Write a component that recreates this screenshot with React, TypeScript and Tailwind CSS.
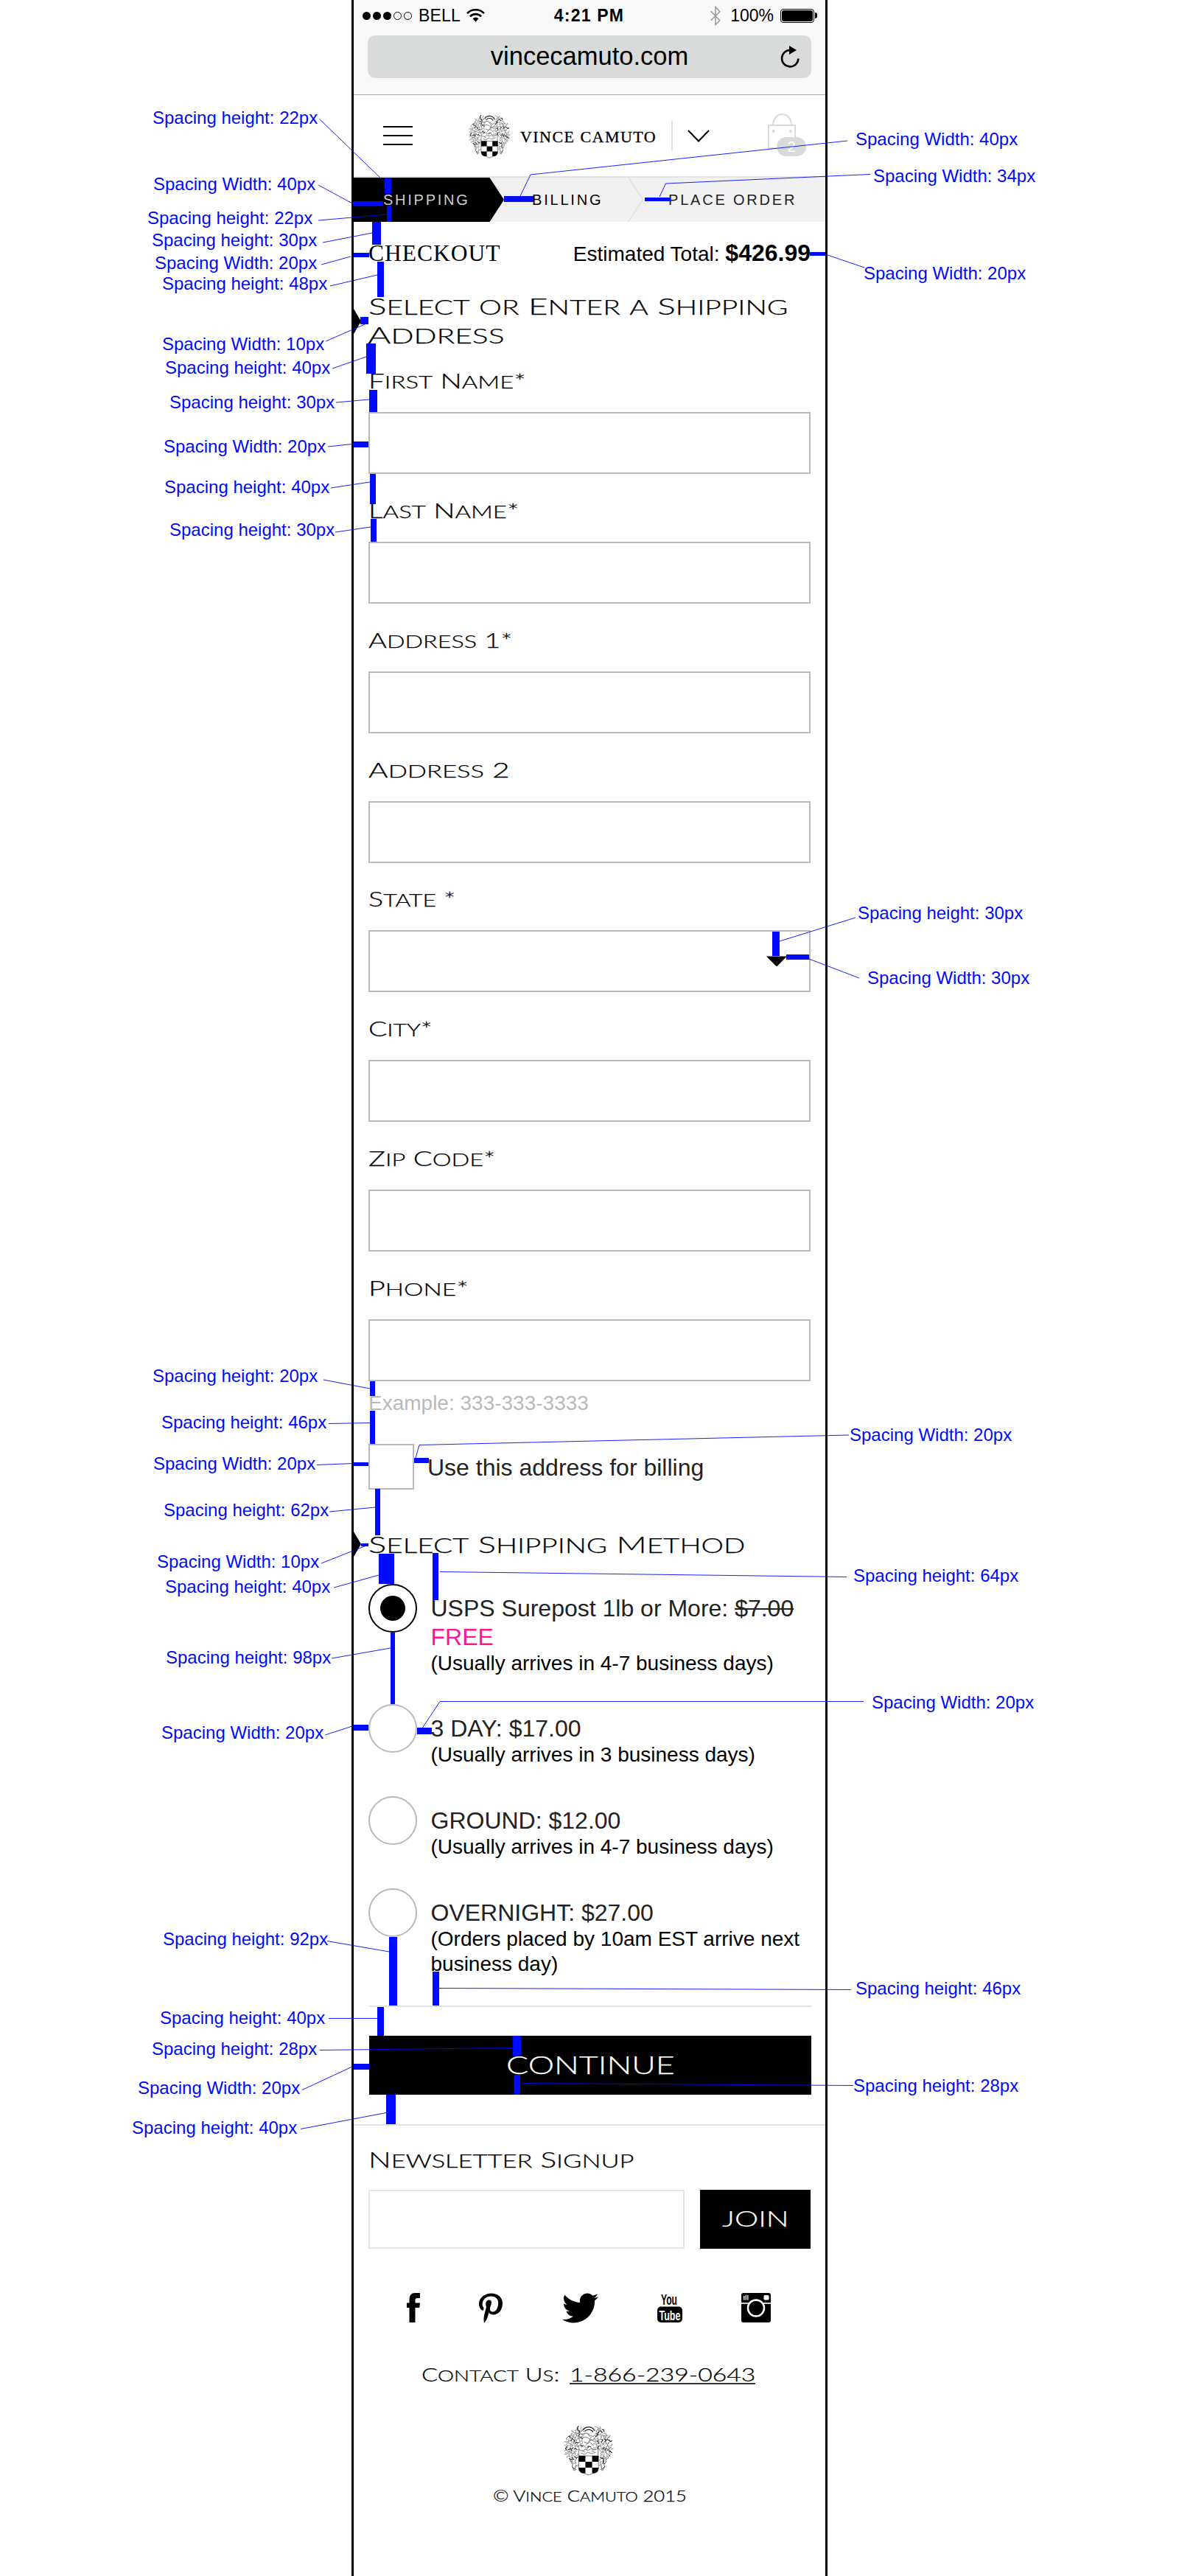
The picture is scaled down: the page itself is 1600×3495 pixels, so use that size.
import React, { useLayoutEffect, useRef, useState } from 'react';
import { FaPinterestP, FaTwitter } from 'react-icons/fa';

/* Wide engraved lettering: light capitals stretched to a set measure. */
function Engraved({ text, width, className = '' }: { text: string; width: number; className?: string }) {
  const ref = useRef<HTMLSpanElement>(null);
  const [scale, setScale] = useState(1.4);
  useLayoutEffect(() => {
    if (ref.current) setScale(width / ref.current.offsetWidth);
  }, [width, text]);
  const runs = text.match(/[a-z]+|[^a-z]+/g) ?? [];
  return (
    <span
      className={'block whitespace-nowrap font-[Lato,sans-serif] font-light [-webkit-text-stroke:0.25px_currentColor] ' + className}
      style={{ width }}
    >
      <span ref={ref} className="block w-max origin-left uppercase" style={{ transform: `scaleX(${scale})` }}>
        {runs.map((r, i) => (
          <span key={i} className={/[a-z]/.test(r) ? 'text-[0.85em] leading-none' : ''}>{r}</span>
        ))}
      </span>
    </span>
  );
}

const leaves = Array.from({ length: 300 }, (_, i) => {
  const a = i * 2.39996;
  const r = Math.sqrt((i + 0.5) / 300);
  const x = 34 + Math.cos(a) * r * 32;
  const y = 31 + Math.sin(a) * r * 29.5;
  return { x, y, turn: (i * i * 37 + i * 91) % 360, heavy: (i * i * 7) % 5 === 0 };
}).filter((l) => !(l.x > 19 && l.x < 49 && l.y > 33) && !(l.x > 27 && l.x < 42 && l.y < 30));

function Crest({ className = '' }: { className?: string }) {
  return (
    <svg viewBox="0 0 68 70" preserveAspectRatio="none" className={className} fill="none" stroke="#222">
      {leaves.map((l, i) => (
        <path
          key={i}
          d="M-2 .8Q-1.400-2 0-.8T2-.8"
          strokeWidth={l.heavy ? 1.1 : 0.45}
          transform={`translate(${l.x.toFixed(1)} ${l.y.toFixed(1)}) rotate(${l.turn})`}
        />
      ))}
      <path
        d="M10 50l3 5-1 3 4 3 1-5M58 50l-3 5 1 3-4 3-1-5M13 58l2 5 3-2M55 58l-2 5-3-2"
        strokeWidth=".7"
      />
      <path d="M27 8a8 7 0 0 1 15 1M29 10a6 5 0 0 1 11 1" strokeWidth="1.200" />
      <path d="M25 14q6-4 10 0t8 1M26 19q5-3 9 1t7-1M28 24l5 2 5-5 4 3M30 29l5-5 6 5M33 13l3 4M38 17l-3 6" strokeWidth=".6" />
      <path d="M21 43v-9q5 4 9 0 4 3 8-1 5 4 9-1v11M24 39l5 2 4-3 5 2 6-2M26 36l3 2M38 36l4 1" strokeWidth=".6" />
      <path d="M21 43h26.500v17q0 6-7 6.500l-6.300 2.500-6.200-2.500q-7-.5-7-6.500z" fill="#fff" strokeWidth=".6" />
      <path
        d="M21 43h9v8h-9zM39 43h8.500v8H39zM30 51h9v8h-9zM21 59h9v7.500h-3q-6-1-6-7.500zM39 59h8.500q0 6.500-5.500 7.500h-3z"
        fill="#000"
        stroke="none"
      />
    </svg>
  );
}

function StatusBar() {
  return (
    <div className="grid h-[42px] grid-cols-3 items-center pl-3 pr-[11px] text-[23px] leading-none">
      <div className="flex items-center">
        <span className="flex gap-[3px]">
          <i className="size-[11px] rounded-full bg-black" />
          <i className="size-[11px] rounded-full bg-black" />
          <i className="size-[11px] rounded-full bg-black" />
          <i className="size-[11px] rounded-full border border-black" />
          <i className="size-[11px] rounded-full border border-black" />
        </span>
        <span className="ml-[9px] tracking-[0.2px]">BELL</span>
        <svg viewBox="0 0 25 18" className="ml-[8px] h-[18px] w-[25px]" fill="none" stroke="#000" strokeWidth="2.600">
          <path d="M1 6.200a16 16 0 0 1 23 0M5 10.300a10.500 10.500 0 0 1 15 0" />
          <path d="M8.600 13.200a5.600 5.600 0 0 1 7.800 0L12.500 17.800z" fill="#000" stroke="none" />
        </svg>
      </div>
      <span className="pr-[2px] text-center font-bold tracking-[1.200px]">4:21 PM</span>
      <div className="flex items-center justify-end">
        <svg viewBox="0 0 16 28" className="mr-3 h-[27px] w-4" fill="none" stroke="#999" strokeWidth="1.600">
          <path d="M1.500 7.500l12.500 13L8 26.500v-25l6 6.500L1.500 20.500" />
        </svg>
        <span>100%</span>
        <span className="ml-[9px] flex h-[19px] w-[46px] rounded-[4px] border border-black p-px">
          <i className="flex-1 rounded-[3px] bg-black" />
        </span>
        <i className="ml-px h-2 w-[3px] rounded-r bg-black" />
      </div>
    </div>
  );
}

function Header() {
  return (
    <header className="flex h-[112px] items-center border-b-2 border-[#e2e2e2] pl-10">
      <div className="flex w-10 flex-col gap-[10px]">
        <i className="h-[2px] bg-black" />
        <i className="h-[2px] bg-black" />
        <i className="h-[2px] bg-black" />
      </div>
      <Crest className="ml-[75px] h-[61px] w-[58px]" />
      <span className="ml-[13px] mt-[3px] w-[186px] whitespace-nowrap font-['Liberation_Serif',serif] text-[22px] tracking-[1.450px] [-webkit-text-stroke:0.3px_#000]">
        VINCE CAMUTO
      </span>
      <i className="ml-[19px] h-10 w-[2px] bg-[#e2e2e2]" />
      <svg viewBox="0 0 30 17" className="ml-5 h-[17px] w-[30px]" fill="none" stroke="#000" strokeWidth="2">
        <path d="M1 1l14 14.500L29 1" />
      </svg>
      <div className="relative ml-[79px] h-[60px] w-[54px]">
        <svg viewBox="0 0 38 49" className="h-[49px] w-[38px]" fill="none" stroke="#dadada" strokeWidth="2">
          <path d="M1 16h36v31H1zM7 16C7-4 32-4 32 16" />
          <circle cx="7.500" cy="24" r="1" />
          <circle cx="31" cy="24" r="1" />
        </svg>
        <span className="absolute left-3 top-8 flex h-[26px] w-10 items-center justify-center rounded-full bg-[#dadada] text-[20px] text-white">
          2
        </span>
      </div>
    </header>
  );
}

function Steps() {
  return (
    <nav className="relative flex h-[60px] items-center bg-[#f1f1f1] text-[20px] leading-none text-[#222]">
      <span className="flex h-full w-[204px] items-center bg-black pl-10 tracking-[2.750px] text-[#ccc] [clip-path:polygon(0_0,184.500px_0,204px_50%,184.500px_100%,0_100%)]">
        SHIPPING
      </span>
      <span className="ml-[38px] w-[149px] tracking-[2.800px] text-black">BILLING</span>
      <svg viewBox="0 0 22 60" className="absolute left-[372px] top-0 h-[60px] w-[22px]" fill="none" stroke="#e2e2e2" strokeWidth="1.500">
        <path d="M1 0l19.500 30L.5 60" />
      </svg>
      <span className="ml-9 whitespace-nowrap tracking-[2.800px]">PLACE ORDER</span>
    </nav>
  );
}

const fields: { label: string; width: number; select?: boolean }[] = [
  { label: 'First Name*', width: 214 },
  { label: 'Last Name*', width: 204 },
  { label: 'Address 1*', width: 195 },
  { label: 'Address 2', width: 192 },
  { label: 'State *', width: 119, select: true },
  { label: 'City*', width: 87 },
  { label: 'Zip Code*', width: 173 },
  { label: 'Phone*', width: 136 },
];

function Marker() {
  return <i className="absolute -left-5 h-[34px] w-[10px] bg-black [clip-path:polygon(0_0,100%_50%,0_100%)]" />;
}

function Option({ checked, height, note, children }: { checked?: boolean; height: string; note: React.ReactNode; children: React.ReactNode }) {
  return (
    <label className={'flex gap-[18.500px] ' + height}>
      <span
        className={
          'flex size-[66px] shrink-0 items-center justify-center rounded-full border-2 ' +
          (checked ? 'border-black' : 'border-[#b9b9b9]')
        }
      >
        {checked && <i className="size-[34px] rounded-full bg-black" />}
      </span>
      <span className="block whitespace-nowrap pt-[14px] text-[32px] leading-[39px] text-[#222]">
        {children}
        <span className="-mt-px block text-[28px] leading-[34px] text-black">{note}</span>
      </span>
    </label>
  );
}

function Socials() {
  return (
    <div className="mt-[60px] flex h-10 items-center pl-[52px]">
      <svg viewBox="0 0 18 40" className="h-10 w-[18px]">
        <path d="M18 0v7h-4q-2.500 0-2.500 2.500v4H18l-.8 6.500h-5.700v20h-8V20H0v-6.500h3.500v-5Q3.500 0 11 0z" />
      </svg>
      <FaPinterestP className="ml-[80px] h-[41px] w-8" preserveAspectRatio="none" />
      <FaTwitter className="ml-[81px] size-[49px]" />
      <svg viewBox="0 0 34 40" className="ml-[80px] h-10 w-[34px] overflow-visible">
        <text x="5" y="16" textLength="22" lengthAdjust="spacingAndGlyphs" fontSize="21" fontWeight="700" fontFamily="Liberation Sans">
          You
        </text>
        <rect y="18.500" width="34" height="21.500" rx="5" />
        <text x="2.500" y="36.500" textLength="29" lengthAdjust="spacingAndGlyphs" fontSize="19" fontWeight="700" fill="#fff" fontFamily="Liberation Sans">
          Tube
        </text>
      </svg>
      <svg viewBox="0 0 40 40" className="ml-[80px] size-10">
        <rect width="40" height="40" rx="3" />
        <path d="M0 14h40" stroke="#ccc" strokeWidth="2" />
        <circle cx="20" cy="20.500" r="11" stroke="#fff" strokeWidth="2.500" />
        <rect x="30.500" y="3" width="7" height="6.500" rx="1.500" fill="#fff" />
        <path d="M3.800 4v5.500M6.300 3v6.500M8.800 3v6.500" stroke="#fff" strokeWidth="1.300" />
      </svg>
    </div>
  );
}

const HEIGHT = 'Spacing height: ';
const WIDTH = 'Spacing Width: ';

const notes: [string, string][] = [
  [HEIGHT + '22px', 'left-[207px] top-[148px]'],
  [WIDTH + '40px', 'left-[208px] top-[238px]'],
  [HEIGHT + '22px', 'left-[200px] top-[284px]'],
  [HEIGHT + '30px', 'left-[206px] top-[314px]'],
  [WIDTH + '20px', 'left-[210px] top-[345px]'],
  [HEIGHT + '48px', 'left-[220px] top-[373px]'],
  [WIDTH + '10px', 'left-[220px] top-[455px]'],
  [HEIGHT + '40px', 'left-[224px] top-[487px]'],
  [HEIGHT + '30px', 'left-[230px] top-[534px]'],
  [WIDTH + '20px', 'left-[222px] top-[594px]'],
  [HEIGHT + '40px', 'left-[223px] top-[649px]'],
  [HEIGHT + '30px', 'left-[230px] top-[707px]'],
  [HEIGHT + '20px', 'left-[207px] top-[1855px]'],
  [HEIGHT + '46px', 'left-[219px] top-[1918px]'],
  [WIDTH + '20px', 'left-[208px] top-[1974px]'],
  [HEIGHT + '62px', 'left-[222px] top-[2037px]'],
  [WIDTH + '10px', 'left-[213px] top-[2107px]'],
  [HEIGHT + '40px', 'left-[224px] top-[2141px]'],
  [HEIGHT + '98px', 'left-[225px] top-[2237px]'],
  [WIDTH + '20px', 'left-[219px] top-[2339px]'],
  [HEIGHT + '92px', 'left-[221px] top-[2619px]'],
  [HEIGHT + '40px', 'left-[217px] top-[2726px]'],
  [HEIGHT + '28px', 'left-[206px] top-[2768px]'],
  [WIDTH + '20px', 'left-[187px] top-[2821px]'],
  [HEIGHT + '40px', 'left-[179px] top-[2875px]'],
  [WIDTH + '40px', 'left-[1161px] top-[177px]'],
  [WIDTH + '34px', 'left-[1185px] top-[227px]'],
  [WIDTH + '20px', 'left-[1172px] top-[359px]'],
  [HEIGHT + '30px', 'left-[1164px] top-[1227px]'],
  [WIDTH + '30px', 'left-[1177px] top-[1315px]'],
  [WIDTH + '20px', 'left-[1153px] top-[1935px]'],
  [HEIGHT + '64px', 'left-[1158px] top-[2126px]'],
  [WIDTH + '20px', 'left-[1183px] top-[2298px]'],
  [HEIGHT + '46px', 'left-[1161px] top-[2686px]'],
  [HEIGHT + '28px', 'left-[1158px] top-[2818px]'],
];

/* Measured gaps: x, y, width, height. */
const bars = [
  [522, 241, 9, 22], [480, 273, 40, 6], [525, 279, 6, 22], [505, 301, 12, 31], [480, 343, 21, 6], [512, 355, 9, 48],
  [489, 430, 11, 10], [497, 466, 13, 41], [501, 529, 11, 30], [480, 599, 20, 8], [502, 643, 8, 41], [503, 704, 8, 31],
  [1099, 342, 21, 5], [684, 266, 40, 8], [875, 268, 34, 5], [1048, 1264, 10, 33], [1067, 1295, 31, 7],
  [502, 1874, 7, 20], [502, 1914, 7, 45], [480, 1984, 20, 5], [562, 1978, 20, 7], [509, 2020, 7, 63],
  [490, 2094, 10, 4], [514, 2108, 21, 41], [587, 2107, 8, 64], [530, 2215, 6, 97], [480, 2340, 20, 8],
  [566, 2344, 20, 9], [528, 2628, 11, 93], [587, 2675, 9, 46], [512, 2723, 9, 39], [696, 2762, 11, 27],
  [698, 2815, 8, 27], [480, 2800, 21, 8], [524, 2842, 13, 40],
];

const leaders = [
  '434,162 522,247', '432,251 480,277', '432,299 525,291', '438,329 505,316', '436,359 476,348', '448,388 512,373',
  '442,463 495,440', '451,500 497,484', '456,546 501,542', '445,606 478,602.5', '449,662 502,654', '455,722 503,715',
  '706,266 720,237 1150,191', '895,267 903.5,249 1181,236.5', '1120,345 1173,363', '1058,1277 1161,1245', '1098,1301 1166,1327',
  '439,1872 502,1884', '446,1931.5 502,1930.5', '430,1987.5 480,1985.5', '447,2051 509,2045', '436,2121 497,2097',
  '453,2154 514,2137', '450,2250 530,2236', '564,1978 569,1960.5 1152,1947', '597,2132.500 1149,2139.500',
  '573.5,2344 597,2308.500 1172,2308.500', '441,2354 478,2342', '444,2633.5 528,2648', '446,2738.500 512,2738.500',
  '434,2781.500 696,2778.500', '410,2835.5 478,2804', '408,2888.500 524,2866.500', '596,2697.5 1155,2699.5', '709,2826.5 1158,2829.5',
];

function Annotations() {
  return (
    <>
      <svg viewBox="0 0 1600 3495" className="pointer-events-none absolute inset-0 h-[3495px] w-[1600px]">
        {bars.map(([x, y, w, h], i) => (
          <rect key={i} x={x} y={y} width={w} height={h} fill="#000aff" />
        ))}
        {leaders.map((p) => (
          <polyline key={p} points={p} fill="none" stroke="#000aff" strokeOpacity=".9" />
        ))}
      </svg>
      {notes.map(([text, at]) => (
        <span key={at} className={'absolute whitespace-nowrap text-[24px] leading-none text-[#000aff] ' + at}>
          {text}
        </span>
      ))}
    </>
  );
}

export default function App() {
  return (
    <div className="relative h-[3495px] w-[1600px] overflow-hidden bg-white font-['Liberation_Sans',Arial,sans-serif] text-black">
      <div className="ml-[477px] h-full w-[646px] border-x-[3px] border-black">
        <div className="h-[129px] border-b border-[#aaa] bg-[#f9f9f9]">
          <StatusBar />
          <div className="relative mx-[19px] mt-[6px] flex h-[58px] items-center justify-center rounded-[10px] bg-[#d9dbda] text-[34.500px]">
            <span className="pb-px">vincecamuto.com</span>
            <svg viewBox="0 0 27 30" className="absolute right-4 h-[30px] w-[27px]" fill="none" stroke="#000" strokeWidth="2.600">
              <path d="M14.500 6A11.200 11.200 0 1 0 25.400 17.500" />
              <path d="M13 0l10 6-10 6z" fill="#000" stroke="none" />
            </svg>
          </div>
        </div>
        <Header />
        <Steps />

        <main className="px-5">
          <div className="mt-[23px] flex h-10 items-baseline justify-between leading-10">
            <h1 className="font-['Liberation_Serif',serif] text-[31.500px] tracking-[1px]">CHECKOUT</h1>
            <p className="text-[28px]">
              Estimated Total: <b className="text-[32px] leading-none">$426.99</b>
            </p>
          </div>

          <h2 className="relative mt-[31px] text-[32px] leading-[39px]">
            <span className="absolute left-0 top-[24px]"><Marker /></span>
            <Engraved text="Select or Enter a Shipping" width={570} />
            <Engraved text="Address" width={186} className="-ml-px" />
          </h2>

          <form className="mt-[29px] flex flex-col gap-[34.860px]">
            {fields.map((f) => (
              <label key={f.label} className="block">
                <Engraved text={f.label} width={f.width} className="h-[30px] text-[27.500px] leading-[30px]" />
                <span className="mt-[27px] flex h-[84px] w-[600px] justify-end border-2 border-[#b9b9b9]">
                  {f.select && (
                    <i className="mr-[30px] mt-[33px] h-[14px] w-7 bg-black [clip-path:polygon(0_0,100%_0,50%_100%)]" />
                  )}
                </span>
              </label>
            ))}
          </form>
          <p className="mt-[15px] text-[28px] leading-[30px] text-[#b9b9b9]">Example: 333-333-3333</p>

          <label className="mt-10 flex h-[62px] items-center gap-[18px]">
            <i className="size-[62px] border-2 border-[#b9b9b9]" />
            <span className="pt-px text-[32px] leading-8 text-[#222]">Use this address for billing</span>
          </label>

          <h2 className="relative mt-[54px] text-[32px] leading-[39px]">
            <span className="absolute left-0 top-[3px]"><Marker /></span>
            <Engraved text="Select Shipping Method" width={512} />
          </h2>

          <div className="mt-[35px] flex flex-col">
            <Option
              checked
              height="h-[163px]"
              note="(Usually arrives in 4-7 business days)"
            >
              USPS Surepost 1lb or More: <s className="decoration-2">$7.00</s>
              <span className="block text-[#ff1493]">FREE</span>
            </Option>
            <Option height="h-[125px]" note="(Usually arrives in 3 business days)">3 DAY: $17.00</Option>
            <Option height="h-[125px]" note="(Usually arrives in 4-7 business days)">GROUND: $12.00</Option>
            <Option height="h-[159px]" note={<>(Orders placed by 10am EST arrive next<br />business day)</>}>
              OVERNIGHT: $27.00
            </Option>
          </div>

          <hr className="ml-px w-[600px] border-t-2 border-[#e2e2e2]" />
          <button className="ml-px mt-[39px] flex h-20 w-[600px] items-center justify-center bg-black pb-[2px] text-[33px] leading-none text-white">
            <Engraved text="CONTINUE" width={229} />
          </button>
        </main>

        <footer className="mt-10 border-t-2 border-[#e2e2e2] px-5 pt-[31px]">
          <Engraved text="Newsletter Signup" width={361} className="h-[30px] text-[29px] leading-[30px]" />
          <div className="mt-[26px] flex gap-[21px]">
            <i className="h-20 w-[429px] border-2 border-[#e5e5e5]" />
            <button className="flex h-20 w-[150px] items-center justify-center bg-black pb-[4px] text-[30px] leading-none text-white">
              <Engraved text="JOIN" width={91} />
            </button>
          </div>
          <Socials />
          <div className="mt-[55px] flex h-[30px] gap-[14px] pl-[72px] text-[25px] leading-[30px]">
            <Engraved text="Contact Us:" width={187} />
            <div className="h-[29px] border-b-2 border-[#333]">
              <Engraved text="1-866-239-0643" width={252} />
            </div>
          </div>
          <Crest className="ml-[264px] mt-[53px] h-[70px] w-[69px]" />
          <Engraved text="© Vince Camuto 2015" width={263} className="ml-[169px] mt-[15px] text-[21px] leading-6" />
        </footer>
      </div>
      <Annotations />
    </div>
  );
}
